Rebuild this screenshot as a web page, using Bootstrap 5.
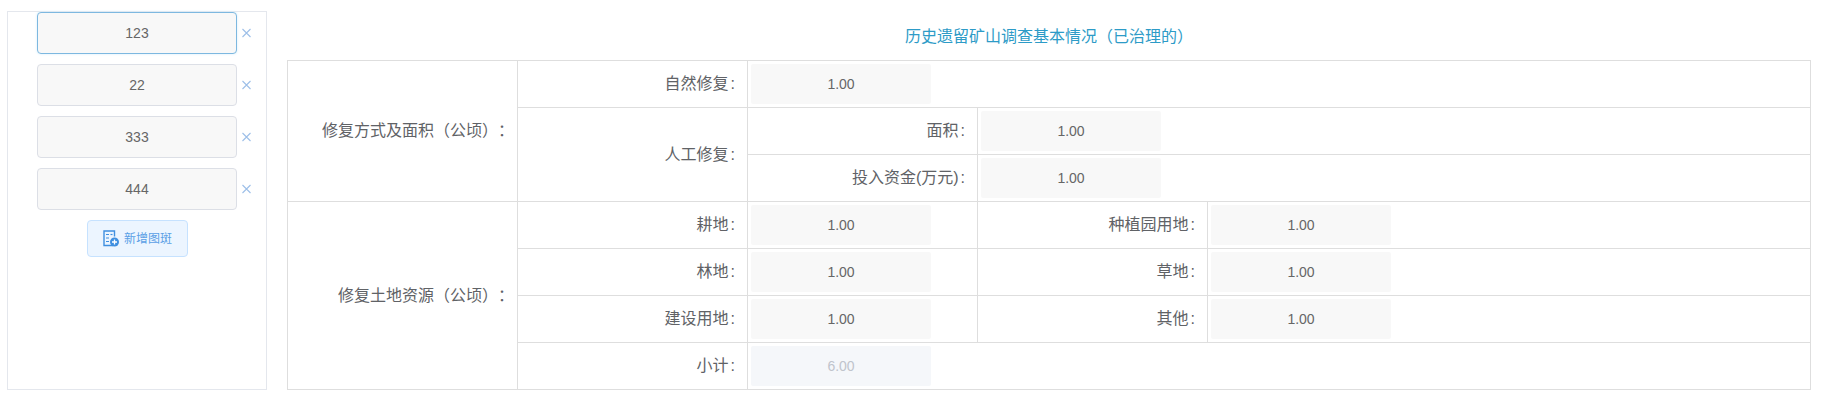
<!DOCTYPE html>
<html lang="zh"><head><meta charset="utf-8">
<link href="https://cdn.jsdelivr.net/npm/bootstrap@5.3.0/dist/css/bootstrap.min.css" rel="stylesheet">
<style>
html,body{height:403px;overflow:hidden;background:#fff}
body{font-family:"Liberation Sans","Noto Sans CJK SC",sans-serif;font-size:14px;color:#606266;text-spacing-trim:space-all}
.page-wrap{padding:11px 11px 13px 7px;height:403px;align-items:stretch;gap:20px}
.side-panel{width:260px;flex:none;border:1px solid #e4e7ed;height:379px}
.spot-row{margin-left:29px;height:42px;margin-bottom:10px}
.spot-input{width:200px;height:42px;background:#f8f8f8;border:1px solid #dcdfe6;border-radius:4px;color:#666;text-align:center;font-size:14px;line-height:40px;outline:0}
.spot-input.is-active{border-color:#7db8e0;box-shadow:0 0 3px #d8eefb}
.del-x{width:19px;flex:none;text-align:center}
.add-btn{width:101px;height:37px;margin-left:79px;background:#ecf5ff;border:1px solid #c6e2ff;border-radius:4px;color:#5a9fe6;font-size:12px;padding:0;gap:5px}
.main-area{flex:1 1 auto;min-width:0}
.form-title{color:#2d9bc7;font-size:16px;line-height:22px;text-align:center;padding-top:15px;height:49px;margin:0;font-weight:400}
.grid-table{table-layout:fixed;width:1524px;border-collapse:collapse;border:1px solid #dedede;margin:0}
.grid-table td{border:1px solid #dedede;height:47px;padding:0;vertical-align:middle}
.col-a,.col-b,.col-c,.col-d{width:230px}
.lbl{text-align:right;padding-right:12px!important;color:#606266;font-size:16px}
.lbl-wide{padding-right:3px!important}
.lbl-colon{padding-left:2px}
.val-input{display:block;width:180px;height:40px;margin-left:3px;background:#f8f8f8;border:0;border-radius:2px;text-align:center;color:#666;font-size:14px;outline:0}
.val-input:disabled{background:#f5f7fa;color:#c0c4cc}
</style></head><body>
<div class="d-flex page-wrap">
 <div class="side-panel">
  <div class="spot-row d-flex align-items-center"><input class="spot-input is-active" value="123"><svg class="del-x" width="10" height="10" viewBox="0 0 10 10"><path d="M1 1 9 9M9 1 1 9" stroke="#9dbfe8" stroke-width="1.1" fill="none"/></svg></div>
  <div class="spot-row d-flex align-items-center"><input class="spot-input" value="22"><svg class="del-x" width="10" height="10" viewBox="0 0 10 10"><path d="M1 1 9 9M9 1 1 9" stroke="#9dbfe8" stroke-width="1.1" fill="none"/></svg></div>
  <div class="spot-row d-flex align-items-center"><input class="spot-input" value="333"><svg class="del-x" width="10" height="10" viewBox="0 0 10 10"><path d="M1 1 9 9M9 1 1 9" stroke="#9dbfe8" stroke-width="1.1" fill="none"/></svg></div>
  <div class="spot-row d-flex align-items-center"><input class="spot-input" value="444"><svg class="del-x" width="10" height="10" viewBox="0 0 10 10"><path d="M1 1 9 9M9 1 1 9" stroke="#9dbfe8" stroke-width="1.1" fill="none"/></svg></div>
  <button class="add-btn d-flex align-items-center justify-content-center" type="button">
   <svg width="16" height="17" viewBox="0 0 16 17"><path d="M10 15.500H1V1h10.500v5.500" fill="none" stroke="#3f8fe0" stroke-width="1.400"/><path d="M3 4.500h3M3 8h3M3 11.500h3" stroke="#3f8fe0" stroke-width="1.200"/><path d="M7.500 4.500h2" stroke="#3f8fe0" stroke-width="1.200"/><circle cx="11.500" cy="12" r="4.500" fill="#3f8fe0"/><path d="M9 12h5M11.500 9.500v5" stroke="#fff" stroke-width="1.300"/></svg>
   <span>新增图斑</span>
  </button>
 </div>
 <div class="main-area">
  <h1 class="form-title">历史遗留矿山调查基本情况（已治理的）</h1>
  <table class="grid-table">
   <colgroup><col class="col-a"><col class="col-b"><col class="col-c"><col class="col-d"><col></colgroup>
   <tr><td class="lbl lbl-wide" rowspan="3">修复方式及面积（公顷）：</td><td class="lbl">自然修复<span class="lbl-colon">:</span></td><td colspan="3"><input class="val-input" value="1.00"></td></tr>
   <tr><td class="lbl" rowspan="2">人工修复<span class="lbl-colon">:</span></td><td class="lbl">面积<span class="lbl-colon">:</span></td><td colspan="2"><input class="val-input" value="1.00"></td></tr>
   <tr><td class="lbl">投入资金(万元)<span class="lbl-colon">:</span></td><td colspan="2"><input class="val-input" value="1.00"></td></tr>
   <tr><td class="lbl lbl-wide" rowspan="4">修复土地资源（公顷）：</td><td class="lbl">耕地<span class="lbl-colon">:</span></td><td><input class="val-input" value="1.00"></td><td class="lbl">种植园用地<span class="lbl-colon">:</span></td><td><input class="val-input" value="1.00"></td></tr>
   <tr><td class="lbl">林地<span class="lbl-colon">:</span></td><td><input class="val-input" value="1.00"></td><td class="lbl">草地<span class="lbl-colon">:</span></td><td><input class="val-input" value="1.00"></td></tr>
   <tr><td class="lbl">建设用地<span class="lbl-colon">:</span></td><td><input class="val-input" value="1.00"></td><td class="lbl">其他<span class="lbl-colon">:</span></td><td><input class="val-input" value="1.00"></td></tr>
   <tr><td class="lbl">小计<span class="lbl-colon">:</span></td><td colspan="3"><input class="val-input" value="6.00" disabled></td></tr>
  </table>
 </div>
</div>
<script src="https://cdn.jsdelivr.net/npm/bootstrap@5.3.0/dist/js/bootstrap.bundle.min.js"></script>
</body></html>
